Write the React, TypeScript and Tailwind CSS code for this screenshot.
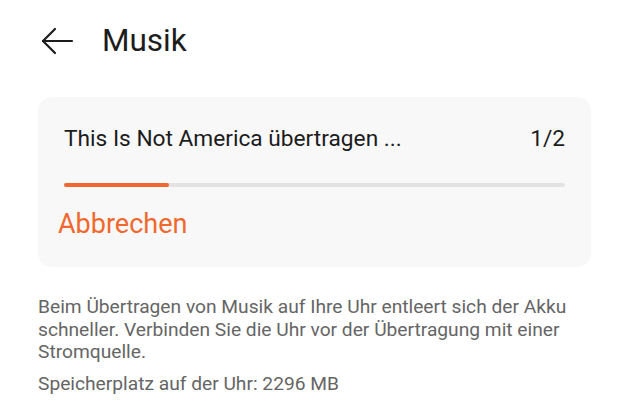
const orange = "text-[#f0682f]";

const BackArrow = () => (
  <svg width="34" height="28" viewBox="0 0 34 28" fill="none" stroke="#1c1c1c" strokeWidth="2.2" strokeLinecap="round" strokeLinejoin="round">
    <path d="M32 14H3" />
    <path d="M15 2L3 14l12 12" />
  </svg>
);

const App = () => {
  return (
    <div className="w-[629px] h-[420px] bg-white font-['Roboto',sans-serif] overflow-hidden">
      <div className="flex items-center h-[82px] pl-[40px]">
        <BackArrow />
        <h1 className="ml-[28px] text-[31.5px] leading-[36px] text-[#1c1c1c]">Musik</h1>
      </div>

      <div className="px-[38px]">
        <div className="mt-[15px] rounded-[14px] bg-[#f8f8f8] pt-[28px] pb-[27px] px-[26px]">
          <div className="flex justify-between text-[22.7px] leading-[28px] text-[#1c1c1c]">
            <span>This Is Not America übertragen ...</span>
            <span>1/2</span>
          </div>
          <div className="mt-[30px] h-[4px] rounded-full bg-[#e3e3e3]">
            <div className="h-full w-[105px] rounded-full bg-[#f0682f]" />
          </div>
          <button className={`mt-[21px] -ml-[6px] block text-[27px] leading-[32px] ${orange}`}>
            Abbrechen
          </button>
        </div>

        <p className="mt-[29px] text-[19.2px] leading-[22.5px] text-[#656565]">
          Beim Übertragen von Musik auf Ihre Uhr entleert sich der Akku schneller. Verbinden Sie die Uhr vor der Übertragung mit einer Stromquelle.
        </p>
        <p className="mt-[9px] text-[19.2px] leading-[22.5px] text-[#656565]">
          Speicherplatz auf der Uhr: 2296 MB
        </p>
      </div>
    </div>
  );
};

export default App;
